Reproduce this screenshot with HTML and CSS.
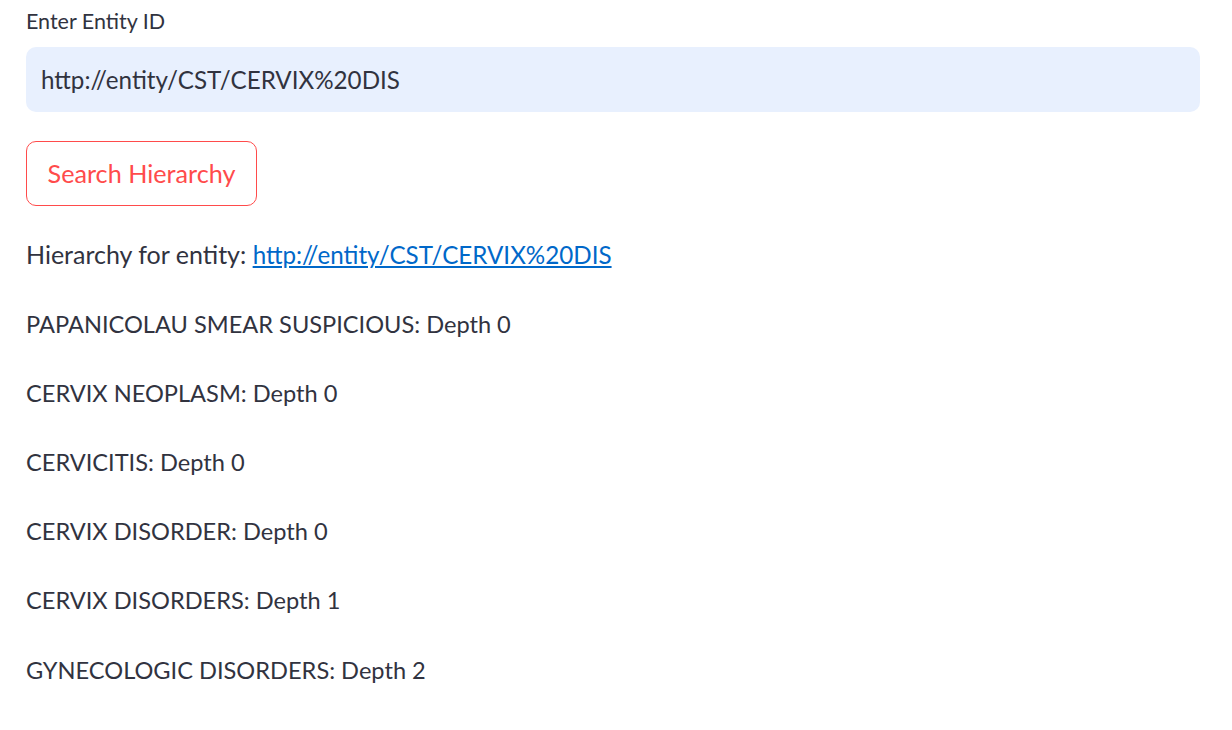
FILE: index.html
```html
<!DOCTYPE html>
<html lang="en">
<head>
<meta charset="utf-8">
<title>Entity Hierarchy</title>
<link rel="stylesheet" href="styles.css">
</head>
<body>
<main class="main">
  <label class="label" for="entity">Enter Entity ID</label>
  <input class="input" id="entity" type="text" value="http://entity/CST/CERVIX%20DIS">
  <div class="btn-row"><button class="btn" type="button">Search Hierarchy</button></div>
  <div class="results">
    <p class="intro">Hierarchy for entity: <a href="#">http://entity/CST/CERVIX%20DIS</a></p>
    <p>PAPANICOLAU SMEAR SUSPICIOUS: Depth 0</p>
    <p>CERVIX NEOPLASM: Depth 0</p>
    <p>CERVICITIS: Depth 0</p>
    <p>CERVIX DISORDER: Depth 0</p>
    <p>CERVIX DISORDERS: Depth 1</p>
    <p>GYNECOLOGIC DISORDERS: Depth 2</p>
  </div>
</main>
</body>
</html>
```
FILE: styles.css
```css
html, body {
  margin: 0;
  padding: 0;
  background: #ffffff;
}
body {
  font-family: Lato, "Open Sans", sans-serif;
  color: #31333f;
}
.main {
  display: flex;
  flex-direction: column;
  padding: 9px 32px 0 26px;
}
.label {
  font-size: 21.5px;
  line-height: 24px;
  height: 24px;
  margin-bottom: 14px;
  color: #31333f;
}
.input {
  box-sizing: border-box;
  height: 65px;
  width: 100%;
  border: none;
  outline: none;
  border-radius: 10px;
  background: #e8f0fe;
  padding: 0 15px;
  font-family: inherit;
  font-size: 24.2px;
  color: #31333f;
  margin: 0 0 29px 0;
}
.btn-row {
  display: flex;
}
.btn {
  box-sizing: border-box;
  height: 65px;
  width: 231px;
  border: 1px solid #ff4b4b;
  border-radius: 10px;
  background: #ffffff;
  color: #ff4b4b;
  font-family: inherit;
  font-size: 25.2px;
  line-height: 1;
  padding: 0 10px 0;
  cursor: pointer;
}
.results {
  margin-top: 33px;
  display: flex;
  flex-direction: column;
}
.results p {
  margin: 0 0 38.4px 0;
  font-size: 23.6px;
  line-height: 30.7px;
  white-space: nowrap;
}
.results p.intro {
  font-size: 25px;
}
.results a {
  color: #0068c9;
  text-decoration: underline;
  font-size: 24.2px;
}
```
